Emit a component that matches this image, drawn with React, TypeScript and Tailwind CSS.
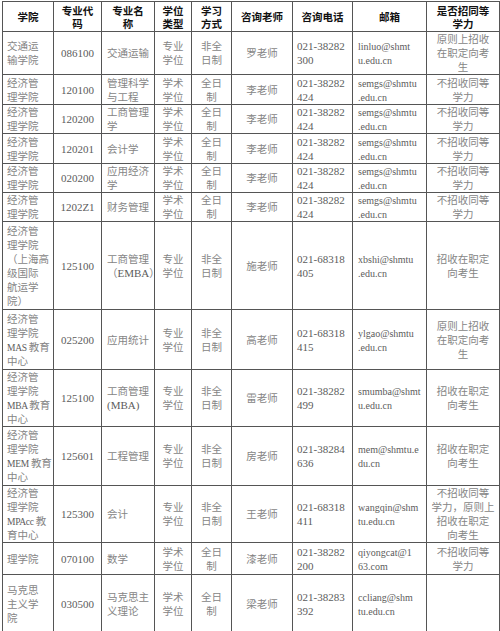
const COLS = ['w-[51px]', 'w-[48px]', 'w-[53px]', 'w-[37px]', 'w-[40px]', 'w-[61px]', 'w-[60px]', 'w-[74px]', 'w-[73px]'];
const ALIGN = [
  'text-left pl-[4px]',
  'text-center',
  'text-left pl-[5px]',
  'text-center',
  'text-center',
  'text-center',
  'text-left pl-[4px]',
  'text-left pl-[5px]',
  'text-center',
];
// Latin runs in the school and mail columns are set a touch smaller so they fit like the half-width face
const LATIN = ['text-[9.5px] tracking-[-0.3px]', '', '', '', '', '', '', 'text-[10px]', ''];

const HEAD = ['学院', '专业代\n码', '专业名\n称', '学位\n类型', '学习\n方式', '咨询老师', '咨询电话', '邮箱', '是否招同等\n学力'];

// row height class + cells, lines broken as in the scan
const ROWS: [string, string[]][] = [
  ['h-[42px]', ['交通运\n输学院', '086100', '交通运输', '专业\n学位', '非全\n日制', '罗老师', '021-38282\n300', 'linluo@shmt\nu.edu.cn', '原则上招收\n在职定向考\n生']],
  ['h-[30px]', ['经济管\n理学院', '120100', '管理科学\n与工程', '学术\n学位', '全日\n制', '李老师', '021-38282\n424', 'semgs@shmtu\n.edu.cn', '不招收同等\n学力']],
  ['h-[29px]', ['经济管\n理学院', '120200', '工商管理\n学', '学术\n学位', '全日\n制', '李老师', '021-38282\n424', 'semgs@shmtu\n.edu.cn', '不招收同等\n学力']],
  ['h-[30px]', ['经济管\n理学院', '120201', '会计学', '学术\n学位', '全日\n制', '李老师', '021-38282\n424', 'semgs@shmtu\n.edu.cn', '不招收同等\n学力']],
  ['h-[28px]', ['经济管\n理学院', '020200', '应用经济\n学', '学术\n学位', '全日\n制', '李老师', '021-38282\n424', 'semgs@shmtu\n.edu.cn', '不招收同等\n学力']],
  ['h-[27px]', ['经济管\n理学院', '1202Z1', '财务管理', '学术\n学位', '全日\n制', '李老师', '021-38282\n424', 'semgs@shmtu\n.edu.cn', '不招收同等\n学力']],
  ['h-[88px]', ['经济管\n理学院\n（上海高\n级国际\n航运学\n院）', '125100', '工商管理\n（EMBA）', '专业\n学位', '非全\n日制', '施老师', '021-68318\n405', 'xbshi@shmtu\n.edu.cn', '招收在职定\n向考生']],
  ['h-[60px]', ['经济管\n理学院\nMAS 教育\n中心', '025200', '应用统计', '专业\n学位', '非全\n日制', '高老师', '021-68318\n415', 'ylgao@shmtu\n.edu.cn', '原则上招收\n在职定向考\n生']],
  ['h-[56px]', ['经济管\n理学院\nMBA 教育\n中心', '125100', '工商管理\n(MBA)', '专业\n学位', '非全\n日制', '雷老师', '021-38282\n499', 'smumba@shmt\nu.edu.cn', '招收在职定\n向考生']],
  ['h-[59px]', ['经济管\n理学院\nMEM 教育\n中心', '125601', '工程管理', '专业\n学位', '非全\n日制', '房老师', '021-38284\n636', 'mem@shmtu.e\ndu.cn', '招收在职定\n向考生']],
  ['h-[57px]', ['经济管\n理学院\nMPAcc 教\n育中心', '125300', '会计', '专业\n学位', '非全\n日制', '王老师', '021-68318\n411', 'wangqin@shm\ntu.edu.cn', '不招收同等\n学力，原则上\n招收在职定\n向考生']],
  ['h-[32px]', ['理学院', '070100', '数学', '学术\n学位', '全日\n制', '漆老师', '021-38282\n200', 'qiyongcat@1\n63.com', '不招收同等\n学力']],
  ['h-[59px]', ['马克思\n主义学\n院', '030500', '马克思主\n义理论', '学术\n学位', '全日\n制', '梁老师', '021-38283\n392', 'ccliang@shm\ntu.edu.cn', '']],
];

// CJK runs are drawn a little smaller and lighter than the Latin/digit runs,
// like the Song face in the scan. Spans carry no line height of their own so
// the cell's 14px strut alone sets the line pitch.
const CJK = /([\u3000-\u303f\u4e00-\u9fff\uff00-\uffef]+)/;

function Text({ value, latin }: { value: string; latin: string }) {
  return (
    <>
      {value.split(CJK).map((part, i) =>
        CJK.test(part) ? (
          <span key={i} className="leading-[0px] text-[10.5px] text-[#858585] font-['Noto_Sans_CJK_SC',sans-serif]">
            {part}
          </span>
        ) : (
          <span key={i} className={`leading-[0px] ${latin}`}>
            {part}
          </span>
        ),
      )}
    </>
  );
}

export default function App() {
  return (
    <div className="w-[500px] h-[631px] bg-white pl-[2px] pt-[1px] overflow-hidden">
      <table className="table-fixed border-collapse w-[497px] text-[11px] leading-[14px] font-['Liberation_Serif',serif]">
        <colgroup>
          {COLS.map((w, i) => (
            <col key={i} className={w} />
          ))}
        </colgroup>
        <thead>
          <tr className="h-[30px]">
            {HEAD.map((h, i) => (
              <th
                key={i}
                className="border border-[#555] p-0 text-center align-middle text-[10.5px] font-bold text-[#111] whitespace-pre leading-[13px] font-['Noto_Sans_CJK_SC',sans-serif]"
              >
                {h}
              </th>
            ))}
          </tr>
        </thead>
        <tbody>
          {ROWS.map(([h, cells], r) => (
            <tr key={r} className={h}>
              {cells.map((c, i) => (
                <td
                  key={i}
                  className={`border border-[#555] p-0 align-middle whitespace-pre text-[#5c5c5c] ${ALIGN[i]}`}
                >
                  <Text value={c} latin={LATIN[i]} />
                </td>
              ))}
            </tr>
          ))}
        </tbody>
      </table>
    </div>
  );
}
